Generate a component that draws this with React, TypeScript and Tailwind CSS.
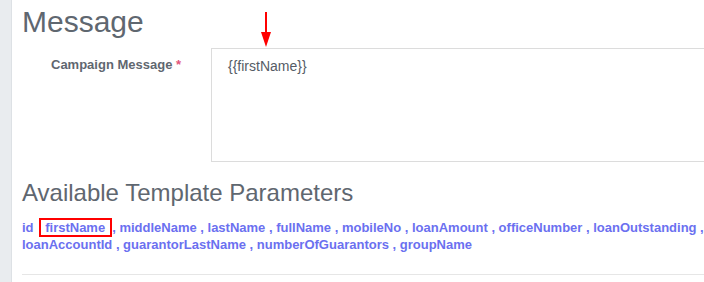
const PARAMS = [
  "id",
  "firstName",
  "middleName",
  "lastName",
  "fullName",
  "mobileNo",
  "loanAmount",
  "officeNumber",
  "loanOutstanding",
  "loanAccountId",
  "guarantorLastName",
  "numberOfGuarantors",
  "groupName",
];

function Arrow() {
  return (
    <svg className="absolute left-[248px] top-[12px]" width="12" height="35" viewBox="0 0 12 35" aria-hidden>
      <path d="M6 0v22" stroke="#ff0000" strokeWidth="2" />
      <path d="M1 20h10L6 35Z" fill="#ff0000" />
    </svg>
  );
}

export default function App() {
  return (
    <div className="flex h-[282px] w-[704px] overflow-hidden bg-white font-['Liberation_Sans',Arial,sans-serif]">
      <div className="w-[12px] shrink-0 border-r border-[#dde1e5] bg-[#e9ecef]" />
      <div className="relative min-w-0 flex-1 pl-[10px]">
        <Arrow />
        <h1 className="pt-[4px] text-[30px] leading-[36px] text-[#5f6770]">Message</h1>

        <div className="mt-[8px] flex">
          <label className="w-[189px] shrink-0 pl-[29px] pt-[7px] text-[13px] font-bold text-[#5f6770]">
            Campaign Message <span className="text-[#e2557a]">*</span>
          </label>
          <div className="h-[114px] w-[560px] shrink-0 border border-[#dcdcdc] px-[16px] pt-[7px] text-[14px] text-[#555c66]">
            {"{{firstName}}"}
          </div>
        </div>

        <h2 className="mt-[16px] text-[24px] leading-[30px] text-[#5f6770]">Available Template Parameters</h2>

        <p className="mt-[11px] text-[13px] font-bold leading-[17px] text-[#6b70f0] whitespace-nowrap">
          id{" "}
          <span className="ml-[2px] border-2 border-[#ff0000] pl-[4px] pr-[5px]">firstName</span>
          {", " + PARAMS.slice(2, 9).join(" , ") + " , "}
          <br />
          {PARAMS.slice(9).join(" , ")}
        </p>

        <div className="mt-[21px] border-t border-[#e6e6e6]" />
      </div>
    </div>
  );
}
